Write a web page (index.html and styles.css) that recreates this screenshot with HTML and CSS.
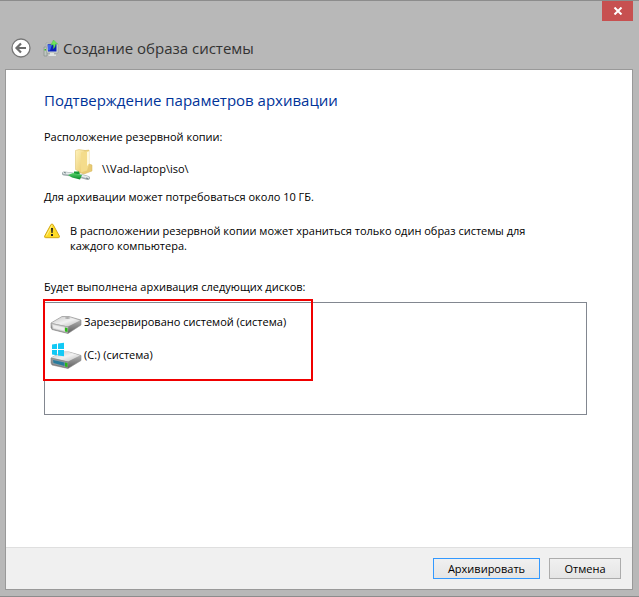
FILE: index.html
```html
<!DOCTYPE html>
<html lang="ru">
<head>
    <meta charset="UTF-8">
    <meta name="viewport" content="width=device-width, initial-scale=1.0">
    <title>Создание образа системы</title>
    <link rel="stylesheet" href="styles.css">
</head>
<body>
<div class="window">
    <div class="titlebar">
        <button class="close-btn" type="button" aria-label="Закрыть">
            <svg width="10" height="8" viewBox="0 0 10 8"><path d="M1.5 0.5L8.5 7.5M8.5 0.5L1.5 7.5" stroke="#fff" stroke-width="2"/></svg>
        </button>
    </div>
    <header class="header">
        <button class="back-btn" type="button" aria-label="Назад">
            <svg width="20" height="20" viewBox="0 0 20 20">
                <circle cx="10" cy="10" r="9" fill="#fff" stroke="#777" stroke-width="1.3"/>
                <path d="M15 10H6M10 5.5L5.5 10l4.500 4.500" fill="none" stroke="#6c6c6c" stroke-width="2.200"/>
            </svg>
        </button>
        <svg class="app-icon" width="16" height="17" viewBox="0 0 16 17">
            <path d="M1 7h3v9H1z" fill="#bfc6c1" stroke="#87908a" stroke-width=".7"/>
            <path d="M1.500 9h1.500v1.500H1.500z" fill="#36bd26"/>
            <path d="M3 3l12 1v9H4z" fill="#d5dbd7" stroke="#919c96" stroke-width=".6"/>
            <path d="M4.500 4.200h9v7.300H5z" fill="#0a20b8"/>
            <path d="M5 5l4 0-2 5.500H5z" fill="#3d66ea"/>
            <path d="M7 13h4v1.500h2V16H5.500v-1.500H7z" fill="#dfe3e0"/>
            <path d="M10.500 0L14.500 4h-2.200c.2 2-.5 3.500-2 4.600.5-1.500.4-3-.1-4.100L8 5z" fill="#6ee45a" stroke="#4cc541" stroke-width=".5"/>
        </svg>
        <h1 class="header-title">Создание образа системы</h1>
    </header>
    <main class="client">
        <div class="content">
            <h2 class="page-title">Подтверждение параметров архивации</h2>
            <p class="text">Расположение резервной копии:</p>
            <div class="location">
                <svg width="32" height="32" viewBox="0 0 32 32">
                    <defs>
                        <linearGradient id="folder" x1="0" x2="1" y1="0" y2="1">
                            <stop offset="0" stop-color="#fff3bd"/>
                            <stop offset="1" stop-color="#e8c766"/>
                        </linearGradient>
                        <linearGradient id="pipe" x1="0" x2="0" y1="0" y2="1">
                            <stop offset="0" stop-color="#58d56b"/>
                            <stop offset="1" stop-color="#07882b"/>
                        </linearGradient>
                    </defs>
                    <path d="M19 2l8-1v14l3 1v6l-8 3-6-2z" fill="#e8ca74" stroke="#d5b65b" stroke-width=".5"/>
                    <path d="M13.500 1.500L17 .5l6 1v20l-4 2-5.500-3z" fill="url(#folder)" stroke="#dfc574" stroke-width=".6"/>
                    <path d="M19 3.500l8-2v14l-2 6-6 2z" fill="#f4dc8b"/>
                    <path d="M25 3l2-.7v12l-2 3z" fill="#fff9dc"/>
                    <path d="M2 24.500l8 1 9 1.500 7 2" fill="none" stroke="#9fabad" stroke-width="4" stroke-linecap="round"/>
                    <path d="M2 24l8 1 9 1.500 7 2" fill="none" stroke="#e6ecec" stroke-width="2" stroke-linecap="round"/>
                    <path d="M12 22.500h5l1 3-6-.5z" fill="#179b37"/>
                    <path d="M6 26l5-2 9 2-2 4.500-8-2z" fill="url(#pipe)"/>
                    <path d="M2 23.500l2 .5M24 29l2 .5" stroke="#708185" stroke-width="1"/>
                </svg>
                <span class="location-path">\\Vad-laptop\iso\</span>
            </div>
            <p class="text">Для архивации может потребоваться около 10 ГБ.</p>
            <div class="warning">
                <svg width="16" height="16" viewBox="0 0 16 16">
                    <path d="M8 1Q8.800 1 9.300 2l6 11q.6 1.700-1 1.700H1.700q-1.600 0-1-1.700l6-11Q7.200 1 8 1z" fill="#ffdc28" stroke="#d3a817"/>
                    <path d="M8 2.200L2.500 12.500" stroke="#fff28e" stroke-width="1"/>
                    <path d="M7 5h2l-.4 5H7.400zM7 11h2v2H7z" fill="#222"/>
                </svg>
                <p class="text">В расположении резервной копии может храниться только один образ системы для каждого компьютера.</p>
            </div>
            <p class="text" id="disks-label">Будет выполнена архивация следующих дисков:</p>
            <div class="disks">
                <ul class="disk-list" aria-labelledby="disks-label">
                    <li class="disk">
                        <svg width="32" height="32" viewBox="0 0 32 32">
                            <defs>
                                <linearGradient id="disk-top" x1="0" x2="1" y1="0" y2="1">
                                    <stop offset="0" stop-color="#c5c5c5"/>
                                    <stop offset=".5" stop-color="#f1f1f1"/>
                                    <stop offset="1" stop-color="#b8b8b8"/>
                                </linearGradient>
                                <linearGradient id="disk-side" x1="0" x2="0" y1="0" y2="1">
                                    <stop offset="0" stop-color="#c4c4c4"/>
                                    <stop offset="1" stop-color="#5e5e5e"/>
                                </linearGradient>
                            </defs>
                            <path d="M1 17l11-6.500h7L31 14v5L18 27.500 2 23.500l-1-2z" fill="url(#disk-side)" stroke="#898989" stroke-width=".6"/>
                            <path d="M1.500 17L12 11h7l11 3.500-12 6z" fill="url(#disk-top)"/>
                            <path d="M1.500 17.500L18 21l-.5 5.800L2.500 23z" fill="#d6d6d6" stroke="#aaa" stroke-width=".6"/>
                            <path d="M3 19l11 2.500v3L3.500 22z" fill="#eee"/>
                            <path d="M15 21.500l2.500.5v4l-2.500-.5z" fill="#29b817"/>
                            <ellipse cx="17.500" cy="12" rx="2.500" ry=".8" fill="#999"/>
                        </svg>
                        <span>Зарезервировано системой (система)</span>
                    </li>
                    <li class="disk">
                        <svg width="32" height="32" viewBox="0 0 32 32">
                            <path d="M1 19l11-6h7l12 3.500v5L18 29.500 2 26l-1-2z" fill="url(#disk-side)" stroke="#898989" stroke-width=".6"/>
                            <path d="M1.500 18.500L12 13h7l11 3.500-12 6z" fill="url(#disk-top)"/>
                            <path d="M1.500 19.500L18 23l-.5 5.800L2.500 25z" fill="#909ba1" stroke="#8c8c8c" stroke-width=".6"/>
                            <path d="M3 21l11.500 2.500V27L3.500 24z" fill="#287b9c"/>
                            <path d="M15 23.500l2.500.5v4l-2.500-.5z" fill="#29b817"/>
                            <path d="M2 5.500l5-.8v5.300H2zM8 4.600l6-.9V10H8zM2 11h5v5.300l-5-.7zM8 11h6v6.200l-6-.8z" fill="#12c9f5"/>
                        </svg>
                        <span>(C:) (система)</span>
                    </li>
                </ul>
                <div class="highlight"></div>
            </div>
        </div>
        <footer class="footer">
            <button class="btn btn-primary" type="button">Архивировать</button>
            <button class="btn" type="button">Отмена</button>
        </footer>
    </main>
</div>
</body>
</html>
```

FILE: styles.css
```css
:root {
    --frame-color: #b8b8b8;
    --frame-border: #8c8c8c;
    --title-color: #003399;
    --marker-color: #f00000;
}
* {
    box-sizing: border-box;
}
body {
    margin: 0;
    font-family: "Open Sans", "Noto Sans", sans-serif;
    font-size: 11px;
    line-height: 16px;
    color: #000;
}
h1, h2, p, ul {
    margin: 0;
    padding: 0;
    font-weight: normal;
}
svg {
    display: block;
    flex-shrink: 0;
}
button {
    font: inherit;
    padding: 0;
}
.window {
    display: flex;
    flex-direction: column;
    min-height: 100vh;
    padding: 0 6px 6px 5px;
    background-color: var(--frame-color);
    border-top: 1px solid var(--frame-border);
    border-bottom: 1px solid var(--frame-border);
}
.titlebar {
    display: flex;
    justify-content: flex-end;
}
.close-btn {
    display: flex;
    align-items: center;
    justify-content: center;
    width: 31px;
    height: 20px;
    background-color: #c75050;
    border: none;
}
.header {
    display: flex;
    align-items: center;
    height: 48px;
    padding: 6px 6px 0;
}
.back-btn {
    margin-right: 12px;
    background: none;
    border: none;
}
.app-icon {
    margin-right: 4px;
}
.header-title {
    font-size: 15px;
    line-height: 20px;
    color: #333;
}
.client {
    flex: 1;
    display: flex;
    flex-direction: column;
    background-color: #fff;
    border: 1px solid #999;
}
.content {
    flex: 1;
    padding: 19px 45px 20px 38px;
}
.page-title {
    margin-bottom: 18px;
    font-size: 15px;
    line-height: 22px;
    color: var(--title-color);
}
.location {
    display: flex;
    align-items: flex-end;
    gap: 8px;
    margin-bottom: 8px;
    padding: 4px 0 0 18px;
}
.location-path {
    padding-bottom: 4px;
}
.warning {
    display: flex;
    gap: 10px;
    margin: 18px 0 26px;
    padding-right: 40px;
}
.warning .text {
    line-height: 15px;
}
.disks {
    position: relative;
    margin-top: 7px;
}
.disk-list {
    min-height: 113px;
    padding: 2px 5px;
    list-style: none;
    border: 1px solid #828790;
}
.disk {
    display: flex;
    align-items: center;
    gap: 2px;
    height: 33px;
}
/* рамка поверх списка дисков */
.highlight {
    position: absolute;
    top: -3px;
    left: -1px;
    width: 270px;
    height: 82px;
    border: 2px solid var(--marker-color);
}
.footer {
    display: flex;
    justify-content: flex-end;
    gap: 9px;
    padding: 10px 11px;
    background-color: #f0f0f0;
    border-top: 1px solid #dfdfdf;
}
.btn {
    min-width: 72px;
    height: 21px;
    line-height: 19px;
    color: #000;
    background: linear-gradient(#f0f0f0, #e5e5e5);
    border: 1px solid #acacac;
}
.btn-primary {
    min-width: 107px;
    border-color: #3399ff;
}
```
